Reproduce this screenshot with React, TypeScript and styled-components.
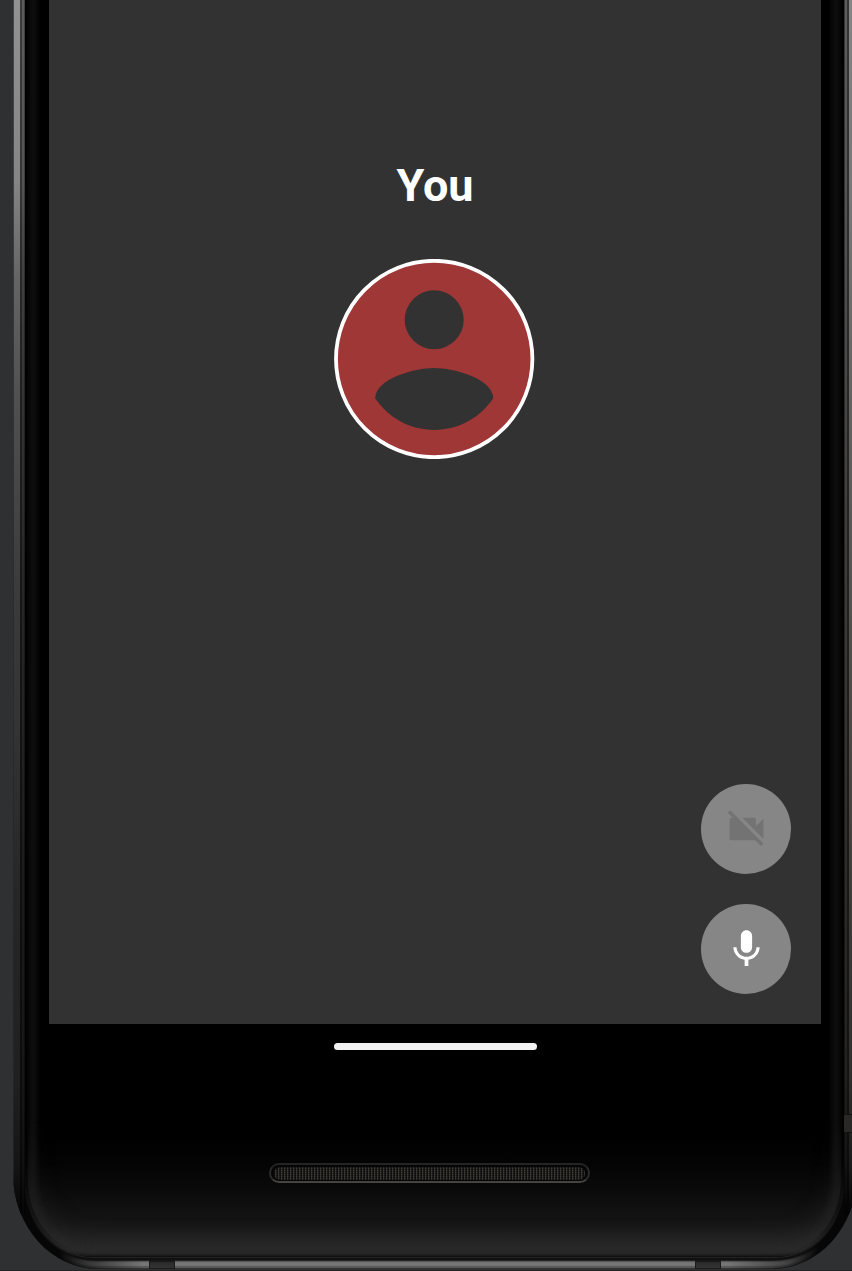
import React from "react";
import styled, { createGlobalStyle } from "styled-components";

const GlobalStyle = createGlobalStyle`
  * { box-sizing: border-box; }
  body { margin: 0; background: #2e3032; overflow: hidden; font-family: Roboto, sans-serif; }
`;

const Desk = styled.main`
  width: 852px;
  height: 1271px;
  overflow: hidden;
  padding-left: 13px;
  background: linear-gradient(#2e3032 0 1270px, #242425 1270px);
`;

const Phone = styled.div`
  position: relative;
  width: 844px;
  height: 1269px;
  padding: 0 13px 12px 12px;
  border-radius: 0 0 85px 85px / 0 0 95px 95px;
  overflow: hidden;
  background: #060606;
`;

const Rail = styled.div<{ $side: "left" | "right" }>`
  position: absolute;
  top: 0;
  ${(p) => p.$side}: 0;
  width: ${(p) => (p.$side === "left" ? 12 : 13)}px;
  height: 1215px;
  background: ${(p) =>
    p.$side === "left"
      ? "linear-gradient(90deg, rgba(32,40,43,.7) 0 1px, transparent 1px 7px, rgba(0,0,0,.6) 7px 9px, rgba(10,10,10,.4) 9px 11px, rgba(0,0,0,.55) 11px), linear-gradient(#929292 0, #858585 180px, #646464 280px, #505050 400px, #3a3a3a 600px, #343434 720px, #262626 900px, #202020 1080px, #151515 1165px, #060606 1210px)"
      : "linear-gradient(90deg, rgba(0,0,0,.6) 0 1px, rgba(0,0,0,.3) 1px 3px, rgba(0,0,0,.6) 3px 5px, transparent 5px), linear-gradient(#858585 0, #777 200px, #5c5a58 500px, #474441 800px, #302f2d 1080px, #1b1b1b 1165px, #060606 1210px)"};
`;

const RailJoint = styled.div`
  position: absolute;
  top: 1114px;
  right: 0;
  width: 13px;
  height: 19px;
  background: #292826;
  border: solid #111;
  border-width: 1px 0;
`;

const BottomRail = styled.div`
  position: absolute;
  inset: 1100px 0 0;
  border-radius: 0 0 85px 85px / 0 0 95px 95px;
  box-shadow: inset 0 -1px 0 #333, inset 0 -3px 1px #585858, inset 0 -8px 2px #777;
  mask-image: linear-gradient(90deg, transparent 45px, rgba(0, 0, 0, .4) 72px, #000 130px calc(100% - 130px), rgba(0, 0, 0, .55) calc(100% - 70px), transparent calc(100% - 38px));
`;

const BottomJoint = styled.div<{ $left: number }>`
  position: absolute;
  left: ${(p) => p.$left}px;
  bottom: 0;
  width: 26px;
  height: 11px;
  background: linear-gradient(#151515 0 3px, #2c2c2c 5px, #343434);
  border: solid #1b1b1b;
  border-width: 0 1px 1px;
`;

const Glass = styled.div`
  position: relative;
  display: flex;
  flex-direction: column;
  height: 1257px;
  padding: 0 23px 0 24px;
  overflow: hidden;
  border-radius: 0 0 68px 68px / 0 0 76px 76px;
  background: linear-gradient(#000 0 1135px, #040404 1165px, #0c0c0c 1195px, #151515 1222px, #222 1242px, #282828 1251px, #1c1c1c 1255px, #080808 1257px);
  box-shadow: 0 1px 0 rgba(40, 40, 40, .8), 0 3px 0 #101010;

  &::before {
    content: "";
    position: absolute;
    inset: -30px 6px 4px;
    border: 4px solid #1c1c1c;
    border-bottom-color: #262626;
    border-radius: 0 0 62px 62px / 0 0 70px 70px;
    filter: blur(3px);
  }
  &::after {
    content: "";
    position: absolute;
    inset: 1120px 3px 3px;
    border-radius: 0 0 65px 65px / 0 0 73px 73px;
    box-shadow: inset 0 -8px 26px rgba(44, 44, 44, .75);
    mask-image: linear-gradient(transparent, #000 90px);
  }
`;

const Screen = styled.section`
  position: relative;
  display: flex;
  flex-direction: column;
  flex-shrink: 0;
  align-items: center;
  height: 1024px;
  padding: 159px 30px 30px;
  background: #323232;
`;

const Name = styled.h1`
  margin: 0;
  color: #fff;
  font-size: 45px;
  line-height: 53px;
  font-weight: 700;
`;

const Avatar = styled.svg`
  width: 201px;
  height: 200px;
  margin: 47px 1px 0 0;
`;

const Controls = styled.div`
  display: flex;
  flex-direction: column;
  gap: 30px;
  align-self: flex-end;
  margin-top: auto;
`;

const RoundButton = styled.button<{ $off?: boolean }>`
  display: flex;
  align-items: center;
  justify-content: center;
  width: 90px;
  height: 90px;
  padding: 0;
  border: 0;
  border-radius: 50%;
  background: #868686;
  color: ${(p) => (p.$off ? "#737373" : "#fff")};
  svg { width: 45px; height: 45px; fill: currentColor; }
`;

const HomeHandle = styled.div`
  position: relative;
  flex-shrink: 0;
  align-self: center;
  width: 203px;
  height: 7px;
  margin: 19px 0 0 1px;
  border-radius: 4px;
  background: #f2f2f2;
`;

const Speaker = styled.div`
  position: relative;
  width: 321px;
  height: 20px;
  margin: 113px 0 0 220px;
  padding: 2px 3px 1px;
  border: 2px solid #2b2b2b;
  border-top-color: #242424;
  border-bottom-color: #464441;
  border-radius: 10px;
  background: #050505;
`;

const Mesh = styled.div`
  height: 100%;
  border-radius: 6px;
  background:
    repeating-linear-gradient(0deg, rgba(0, 0, 0, .3) 0 1px, transparent 1px 2px),
    repeating-linear-gradient(90deg, #141311 0 1px, #403d38 1px 2px, #211f1d 2px 3px);
`;

export default function App() {
  return (
    <>
      <GlobalStyle />
      <Desk>
        <Phone>
          <Rail $side="left" />
          <Rail $side="right" />
          <RailJoint />
          <BottomRail />
          <BottomJoint $left={136} />
          <BottomJoint $left={682} />
          <Glass>
            <Screen>
              <Name>You</Name>
              <Avatar viewBox="0 0 201 200" aria-label="Avatar">
                <circle cx="100.2" cy="100" r="98.2" fill="#9f3736" stroke="#fff" strokeWidth="3.8" />
                <g transform="translate(-17.8 -17.9) scale(9.833)" fill="#323232">
                  <circle cx="12" cy="8" r="3" />
                  <path d="M12 19.2c-2.5 0-4.71-1.28-6-3.22.03-1.99 4-3.08 6-3.08 1.99 0 5.97 1.09 6 3.08-1.29 1.94-3.5 3.22-6 3.22z" />
                </g>
              </Avatar>
              <Controls>
                <RoundButton $off disabled aria-label="Camera off">
                  <svg viewBox="0 0.25 24 24">
                    <path d="M21 6.5l-4 4V7c0-.55-.45-1-1-1H9.82L21 17.18V6.5zM3.27 2L2 3.27 4.73 6H4c-.55 0-1 .45-1 1v10c0 .55.45 1 1 1h12c.21 0 .39-.08.54-.18L19.73 21 21 19.73 3.27 2z" />
                  </svg>
                </RoundButton>
                <RoundButton aria-label="Microphone">
                  <svg viewBox="0 0.25 24 24">
                    <path d="M12 14c1.66 0 2.99-1.34 2.99-3L15 5c0-1.66-1.34-3-3-3S9 3.34 9 5v6c0 1.66 1.34 3 3 3zm5.3-3c0 3-2.54 5.1-5.3 5.1S6.7 14 6.7 11H5c0 3.41 2.72 6.23 6 6.72V21h2v-3.28c3.28-.48 6-3.3 6-6.72h-1.7z" />
                  </svg>
                </RoundButton>
              </Controls>
            </Screen>
            <HomeHandle />
            <Speaker>
              <Mesh />
            </Speaker>
          </Glass>
        </Phone>
      </Desk>
    </>
  );
}
